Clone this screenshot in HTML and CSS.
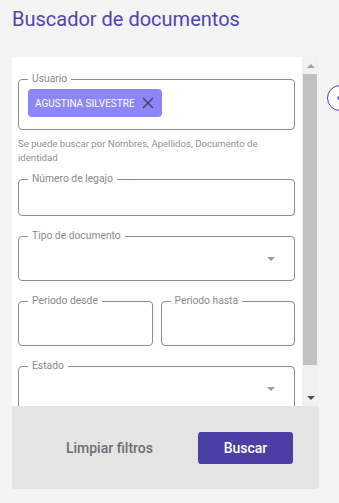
FILE: index.html
```html
<!DOCTYPE html>
<html lang="es">
<head>
<meta charset="utf-8">
<title>Buscador de documentos</title>
<link rel="stylesheet" href="styles.css">
</head>
<body>
<h1 class="title">Buscador de documentos</h1>
<div class="row">
  <div class="card">
    <div class="scroll">
      <div class="content">
        <fieldset class="field field-user">
          <legend>Usuario</legend>
          <div class="chip">
            <span class="chip-text">AGUSTINA SILVESTRE</span>
            <svg class="chip-x" width="12" height="12" viewBox="0 0 12 12"><path d="M1 1L11 11M11 1L1 11" stroke="#3f3d5e" stroke-width="1.3" fill="none"/></svg>
          </div>
        </fieldset>
        <p class="helper">Se puede buscar por Nombres, Apellidos, Documento de identidad</p>
        <fieldset class="field field-short">
          <legend>Número de legajo</legend>
        </fieldset>
        <fieldset class="field field-select">
          <legend>Tipo de documento</legend>
          <span class="caret"></span>
        </fieldset>
        <div class="pair">
          <fieldset class="field field-tall">
            <legend>Periodo desde</legend>
          </fieldset>
          <fieldset class="field field-tall">
            <legend>Periodo hasta</legend>
          </fieldset>
        </div>
        <fieldset class="field field-select">
          <legend>Estado</legend>
          <span class="caret"></span>
        </fieldset>
      </div>
      <div class="scrollbar">
        <div class="sb-btn"><span class="sb-up"></span></div>
        <div class="sb-thumb"></div>
        <div class="sb-fill"></div>
        <div class="sb-btn"><span class="sb-down"></span></div>
      </div>
    </div>
    <div class="footer">
      <button class="btn-clear">Limpiar filtros</button>
      <button class="btn-search">Buscar</button>
    </div>
  </div>
  <button class="side-toggle" aria-label="Contraer">
    <svg width="10" height="12" viewBox="0 0 10 12"><path d="M7 2L3 6L7 10" stroke="#4c40b0" stroke-width="1.6" fill="none" stroke-linecap="round" stroke-linejoin="round"/></svg>
  </button>
</div>
</body>
</html>
```
FILE: styles.css
```css
* { box-sizing: border-box; }
html, body { margin: 0; padding: 0; }
body {
  width: 339px;
  height: 503px;
  overflow: hidden;
  background: #f4f4f4;
  font-family: Roboto, "Liberation Sans", sans-serif;
}
.title {
  margin: 0;
  padding: 7px 12px 0;
  font-size: 20px;
  line-height: 24px;
  font-weight: 400;
  color: #4f45b3;
}
.row {
  display: flex;
  align-items: flex-start;
  margin-top: 26px;
  padding-left: 12px;
}
.card {
  width: 307px;
  flex-shrink: 0;
  display: flex;
  flex-direction: column;
}
.scroll {
  height: 349px;
  display: flex;
}
.content {
  flex: 1;
  background: #fff;
  overflow: hidden;
  padding: 16px 7px 0 6px;
}
.field {
  margin: 0;
  border: 1px solid #8e8e8e;
  border-radius: 4px;
  padding: 0 9px;
  min-width: 0;
}
.field legend {
  font-size: 10.3px;
  line-height: 12px;
  color: #8a8a8a;
  padding: 0 4px;
}
.field-user { padding-top: 4px; padding-bottom: 12px; }
.chip {
  display: inline-flex;
  align-items: center;
  height: 28px;
  padding: 0 8px 0 7px;
  background: #8c86f7;
  border-radius: 4px;
  gap: 7px;
}
.chip-text {
  color: #fff;
  font-size: 10px;
  font-weight: 400;
}
.chip-x { display: block; }
.helper {
  margin: 7px 0 0;
  font-size: 9.6px;
  line-height: 13.5px;
  color: #929292;
}
.field-short { height: 43px; margin-top: 9px; }
.field-select {
  height: 51px;
  margin-top: 14px;
  display: flex;
  justify-content: flex-end;
  align-items: flex-start;
  padding-right: 19px;
  padding-top: 15px;
}
.caret {
  width: 0;
  height: 0;
  border-left: 4px solid transparent;
  border-right: 4px solid transparent;
  border-top: 4px solid #9a9a9a;
}
.pair {
  display: flex;
  gap: 8px;
  margin-top: 14px;
}
.pair .field { flex: 1; }
.field-tall { height: 51px; }
.scrollbar {
  width: 17px;
  background: #f1f1f1;
  display: flex;
  flex-direction: column;
}
.sb-btn {
  height: 17px;
  display: flex;
  align-items: center;
  justify-content: center;
}
.sb-up, .sb-down {
  width: 0;
  height: 0;
  border-left: 4px solid transparent;
  border-right: 4px solid transparent;
}
.sb-up { border-bottom: 4px solid #a3a3a3; }
.sb-down { border-top: 4px solid #505050; }
.sb-thumb {
  height: 291px;
  margin: 0 2px 0 1px;
  background: #c1c1c1;
}
.sb-fill { flex: 1; }
.footer {
  height: 83px;
  background: #e4e4e4;
  display: flex;
  align-items: center;
  justify-content: flex-end;
  padding-right: 26px;
  gap: 45px;
  border-radius: 0 0 3px 3px;
}
.btn-clear, .btn-search {
  font-family: Roboto, "Liberation Sans", sans-serif;
  font-size: 14px;
  font-weight: 500;
  border: 0;
  cursor: pointer;
}
.btn-clear {
  background: transparent;
  color: #6e6e6e;
  padding: 0;
}
.btn-search {
  width: 95px;
  height: 32px;
  background: #4c3fa3;
  color: #fff;
  border-radius: 3px;
}
.side-toggle {
  flex-shrink: 0;
  margin: 28px 0 0 8px;
  width: 26px;
  height: 26px;
  border-radius: 50%;
  border: 1.5px solid #4c40b0;
  background: #fff;
  padding: 0;
  display: flex;
  align-items: center;
  justify-content: center;
}
```
